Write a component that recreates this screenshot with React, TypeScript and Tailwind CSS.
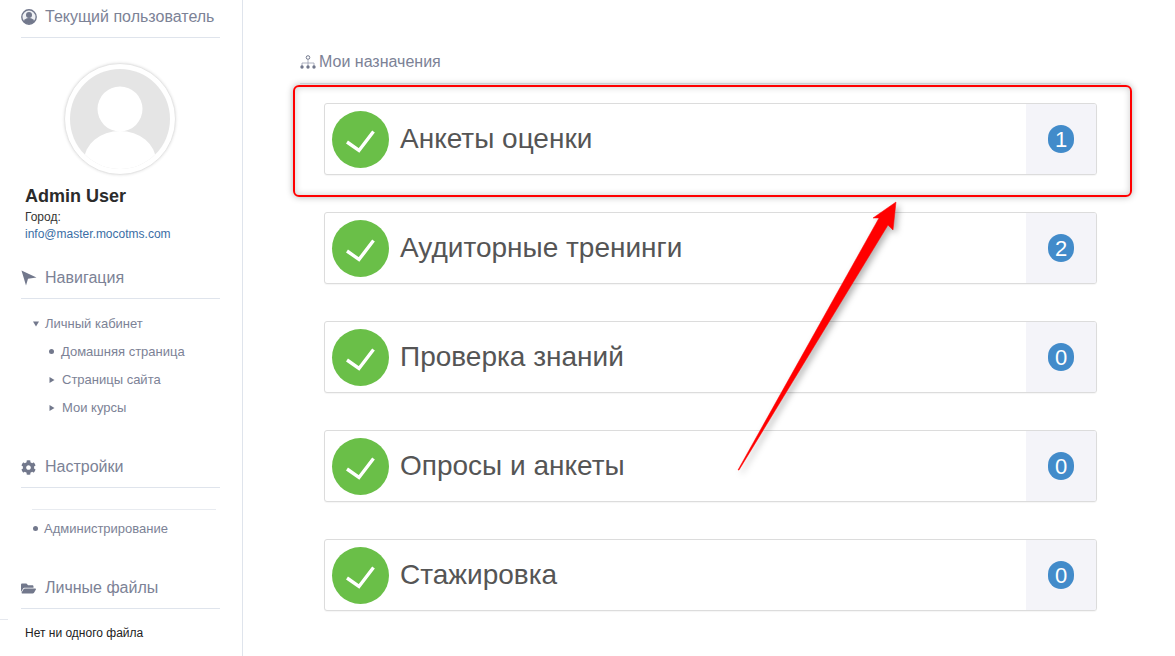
import { FaCog, FaFolderOpen } from "react-icons/fa";
import type { ReactNode } from "react";

const cards = [
  { title: "Анкеты оценки", count: 1 },
  { title: "Аудиторные тренинги", count: 2 },
  { title: "Проверка знаний", count: 0 },
  { title: "Опросы и анкеты", count: 0 },
  { title: "Стажировка", count: 0 },
];

function SectionHeader({ icon, title, className }: { icon: ReactNode; title: string; className: string }) {
  return (
    <div className={`flex items-center border-b border-[#dfe4ec] text-[16px] text-[#7c8296] ${className}`}>
      <span className="flex w-[24px] shrink-0 items-center text-[#72788c]">{icon}</span>
      {title}
    </div>
  );
}

function UserRing() {
  return (
    <svg width="16" height="16" viewBox="0 0 16 16">
      <defs>
        <clipPath id="ring">
          <circle cx="8" cy="8" r="7" />
        </clipPath>
      </defs>
      <circle cx="8" cy="8" r="7.2" fill="#eef0f4" stroke="#72788c" strokeWidth="1.4" />
      <g clipPath="url(#ring)" fill="#72788c">
        <circle cx="8" cy="6" r="3" />
        <ellipse cx="8" cy="13.5" rx="5.5" ry="4.5" />
      </g>
    </svg>
  );
}

function Cursor() {
  return (
    <svg width="16" height="16" viewBox="0 0 16 16">
      <polygon points="0.5,0.5 15.5,7.5 7,8.8 5,15.5" fill="#72788c" />
    </svg>
  );
}

function Sitemap() {
  return (
    <svg className="mr-[3px]" width="16" height="14" viewBox="0 0 16 14" fill="none">
      <circle cx="8" cy="2.5" r="1.8" stroke="#72788c" />
      <path d="M8 4.5V8M2 11V8H14V11M8 8V11" stroke="#9aa0b0" strokeWidth="0.8" />
      <circle cx="2" cy="12" r="1.7" fill="#72788c" />
      <circle cx="8" cy="12" r="1.7" fill="#72788c" />
      <circle cx="14" cy="12" r="1.7" fill="#72788c" />
    </svg>
  );
}

function Caret({ down }: { down?: boolean }) {
  return (
    <svg className={down ? "mr-[6px]" : "mr-[7px]"} width="6" height="6" viewBox="0 0 6 6">
      <polygon points={down ? "0,0.5 6,0.5 3,5.5" : "0.5,0 5.5,3 0.5,6"} fill="#72788c" />
    </svg>
  );
}

function Check() {
  return (
    <div className="mt-[1px] h-[57px] w-[57px] shrink-0 rounded-full bg-[#6abf48]">
      <svg width="57" height="57" viewBox="0 0 57 57" fill="none">
        <path d="M15 31 L27 39.5 L41.5 20.5" stroke="#fff" strokeWidth="3.4" />
      </svg>
    </div>
  );
}

export default function App() {
  return (
    <div className="relative flex h-[656px] w-[1175px] overflow-hidden bg-white font-['Liberation_Sans',Arial,sans-serif]">
      <aside className="relative h-full w-[243px] shrink-0 border-r border-[#dfe4ec] pl-[21px] pr-[22px]">
        <SectionHeader icon={<UserRing />} title="Текущий пользователь" className="h-[38px] pb-[4px]" />
        <div className="ml-[43px] mt-[25px] flex h-[112px] w-[112px] items-center justify-center rounded-full border border-[#e6e6e6] bg-white shadow-[0_0_3px_rgba(0,0,0,0.12)]">
          <svg width="100" height="100" viewBox="0 0 100 100">
            <defs>
              <clipPath id="avatar">
                <circle cx="50" cy="50" r="50" />
              </clipPath>
            </defs>
            <circle cx="50" cy="50" r="50" fill="#e5e5e5" />
            <g clipPath="url(#avatar)" fill="#fff">
              <circle cx="50" cy="40" r="22.5" />
              <ellipse cx="50" cy="92" rx="36" ry="30" />
            </g>
          </svg>
        </div>
        <div className="ml-[4px] mt-[9px] text-[18px] font-bold leading-[24px] text-[#2b2b2b]">Admin User</div>
        <div className="ml-[4px] mt-[1px] text-[12px] leading-[17px] text-[#333]">Город:</div>
        <div className="ml-[4px] text-[12px] leading-[17px] text-[#3a6ea5]">info@master.mocotms.com</div>

        <SectionHeader icon={<Cursor />} title="Навигация" className="mt-[15px] h-[41px]" />
        <div className="mt-[16px] text-[13px] leading-[17px] text-[#7c8296]">
          <div className="flex items-center pl-[12px]">
            <Caret down />Личный кабинет
          </div>
          <div className="mt-[11px] flex items-center pl-[28px]">
            <span className="mr-[7px] h-[5px] w-[5px] rounded-full bg-[#72788c]" />Домашняя страница
          </div>
          <div className="mt-[11px] flex items-center pl-[28px]">
            <Caret />Страницы сайта
          </div>
          <div className="mt-[11px] flex items-center pl-[28px]">
            <Caret />Мои курсы
          </div>
        </div>

        <SectionHeader icon={<FaCog className="h-[15px] w-[15px]" />} title="Настройки" className="mt-[31px] h-[41px]" />
        <div className="ml-[11px] mr-[4px] mt-[21px] border-t border-[#e8ebf0]" />
        <div className="mt-[10px] flex items-center pl-[12px] text-[13px] leading-[17px] text-[#7c8296]">
          <span className="mr-[6px] h-[5px] w-[5px] rounded-full bg-[#72788c]" />Администрирование
        </div>

        <SectionHeader icon={<FaFolderOpen className="h-[15px] w-[15px]" />} title="Личные файлы" className="mt-[31px] h-[41px]" />
        <div className="ml-[4px] mt-[16px] text-[12px] leading-[17px] text-[#222]">Нет ни одного файла</div>
        <div className="absolute left-0 top-[619px] h-px w-[8px] bg-[#e5e8ee]" />
      </aside>

      <main className="w-[932px] pl-[57px] pt-[52px]">
        <div className="flex h-[32px] w-[821px] items-center border-b border-[#e3e6ec] pb-[11px] text-[16px] text-[#7c8296]">
          <Sitemap />
          Мои назначения
        </div>
        <div className="ml-[24px] mt-[19px] flex w-[773px] flex-col gap-[37px]">
          {cards.map((card) => (
            <div key={card.title} className="flex h-[72px] overflow-hidden rounded-[3px] border border-[#dcdcdc] bg-white shadow-[0_1px_1px_rgba(0,0,0,0.04)]">
              <div className="flex flex-1 items-center gap-[11px] pl-[7px] text-[28px] text-[#555]">
                <Check />
                {card.title}
              </div>
              <div className="flex w-[70px] items-center justify-center bg-[#f4f4f9]">
                <span className="flex h-[28px] w-[26px] items-center justify-center rounded-full bg-[#428bca] text-[22px] text-white">
                  {card.count}
                </span>
              </div>
            </div>
          ))}
        </div>
      </main>

      {/* red annotation drawn over the screenshot */}
      <div className="absolute left-[293px] top-[85px] h-[112px] w-[839px] rounded-[6px] border-2 border-[#ff0000] shadow-[0_0_7px_rgba(0,0,0,0.3),inset_0_0_7px_rgba(0,0,0,0.2)]" />
      <svg className="absolute left-0 top-0" width="1175" height="656" viewBox="0 0 1175 656" style={{ filter: "drop-shadow(3px 3px 3px rgba(0,0,0,0.3))" }}>
        <polygon points="738,470 879,218 873,218 896,202 893,230 888,225 739,470" fill="#ff0000" stroke="#ff0000" strokeWidth="0.5" />
      </svg>
    </div>
  );
}
